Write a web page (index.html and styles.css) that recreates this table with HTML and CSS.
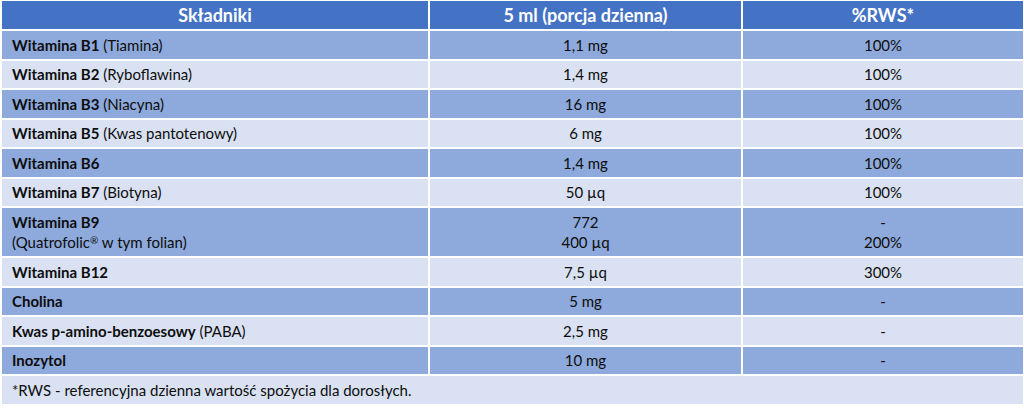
FILE: index.html
```html
<!DOCTYPE html>
<html lang="pl">
<head>
<meta charset="utf-8">
<title>Składniki</title>
<link rel="stylesheet" href="styles.css">
</head>
<body>
<table class="nutri">
  <colgroup>
    <col class="c1"><col class="c2"><col class="c3">
  </colgroup>
  <thead>
    <tr class="head">
      <th>Składniki</th>
      <th>5 ml (porcja dzienna)</th>
      <th>%RWS*</th>
    </tr>
  </thead>
  <tbody>
    <tr class="dark"><td class="name"><b>Witamina B1</b> (Tiamina)</td><td>1,1 mg</td><td>100%</td></tr>
    <tr class="light"><td class="name"><b>Witamina B2</b> (Ryboflawina)</td><td>1,4 mg</td><td>100%</td></tr>
    <tr class="dark"><td class="name"><b>Witamina B3</b> (Niacyna)</td><td>16 mg</td><td>100%</td></tr>
    <tr class="light"><td class="name"><b>Witamina B5</b> (Kwas pantotenowy)</td><td>6 mg</td><td>100%</td></tr>
    <tr class="dark"><td class="name"><b>Witamina B6</b></td><td>1,4 mg</td><td>100%</td></tr>
    <tr class="light"><td class="name"><b>Witamina B7</b> (Biotyna)</td><td>50 µq</td><td>100%</td></tr>
    <tr class="dark double"><td class="name"><b>Witamina B9</b><br>(Quatrofolic<span class="reg">®</span> w tym folian)</td><td>772<br>400 µq</td><td>-<br>200%</td></tr>
    <tr class="light"><td class="name"><b>Witamina B12</b></td><td>7,5 µq</td><td>300%</td></tr>
    <tr class="dark"><td class="name"><b>Cholina</b></td><td>5 mg</td><td>-</td></tr>
    <tr class="light"><td class="name"><b>Kwas p-amino-benzoesowy</b> (PABA)</td><td>2,5 mg</td><td>-</td></tr>
    <tr class="dark"><td class="name"><b>Inozytol</b></td><td>10 mg</td><td>-</td></tr>
    <tr class="light note"><td colspan="3">*RWS - referencyjna dzienna wartość spożycia dla dorosłych.</td></tr>
  </tbody>
</table>
</body>
</html>
```

FILE: styles.css
```css
html, body {
  margin: 0;
  padding: 0;
  background: #ffffff;
}

body {
  font-family: Lato, "Liberation Sans", sans-serif;
  font-size: 15px;
  color: #0d0d0d;
}

.nutri {
  border-collapse: separate;
  border-spacing: 0;
  width: 1021px;
  margin: 1px 0 0 2px;
  table-layout: fixed;
}

.c1 { width: 428px; }
.c2 { width: 313px; }
.c3 { width: 280px; }

.nutri th,
.nutri td {
  border-right: 2px solid #ffffff;
  border-bottom: 2px solid #ffffff;
  padding: 0 10px;
  text-align: center;
  vertical-align: middle;
  line-height: 20px;
  box-sizing: border-box;
  height: 29.5px;
}

.nutri tr > :last-child {
  border-right: 0;
}

.head th {
  background: #4472c4;
  color: #ffffff;
  font-weight: 700;
  font-size: 18px;
  height: 30px;
}

.dark td { background: #8ea9db; }
.light td { background: #d9e1f2; }

.nutri td.name {
  text-align: left;
}

.name b { font-weight: 700; }

.reg {
  font-size: 10px;
  vertical-align: 4px;
  line-height: 0;
}

.double td {
  height: 50px;
}

.note td {
  text-align: left;
  border-right: 0;
}
```
